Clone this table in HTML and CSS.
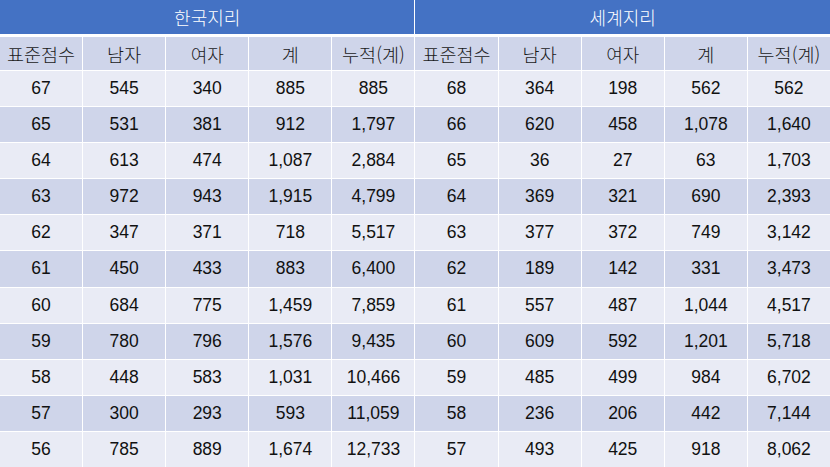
FILE: index.html
```html
<!DOCTYPE html>
<html lang="ko">
<head>
<meta charset="utf-8">
<link rel="stylesheet" href="styles.css">
</head>
<body>
<div class="table">
  <div class="group">한국지리</div>
  <div class="group">세계지리</div>
  <div class="head">표준점수</div><div class="head">남자</div><div class="head">여자</div><div class="head">계</div><div class="head">누적(계)</div>
  <div class="head">표준점수</div><div class="head">남자</div><div class="head">여자</div><div class="head">계</div><div class="head">누적(계)</div>

  <div class="c l">67</div><div class="c l">545</div><div class="c l">340</div><div class="c l">885</div><div class="c l">885</div><div class="c l">68</div><div class="c l">364</div><div class="c l">198</div><div class="c l">562</div><div class="c l">562</div>
  <div class="c d">65</div><div class="c d">531</div><div class="c d">381</div><div class="c d">912</div><div class="c d">1,797</div><div class="c d">66</div><div class="c d">620</div><div class="c d">458</div><div class="c d">1,078</div><div class="c d">1,640</div>
  <div class="c l">64</div><div class="c l">613</div><div class="c l">474</div><div class="c l">1,087</div><div class="c l">2,884</div><div class="c l">65</div><div class="c l">36</div><div class="c l">27</div><div class="c l">63</div><div class="c l">1,703</div>
  <div class="c d">63</div><div class="c d">972</div><div class="c d">943</div><div class="c d">1,915</div><div class="c d">4,799</div><div class="c d">64</div><div class="c d">369</div><div class="c d">321</div><div class="c d">690</div><div class="c d">2,393</div>
  <div class="c l">62</div><div class="c l">347</div><div class="c l">371</div><div class="c l">718</div><div class="c l">5,517</div><div class="c l">63</div><div class="c l">377</div><div class="c l">372</div><div class="c l">749</div><div class="c l">3,142</div>
  <div class="c d">61</div><div class="c d">450</div><div class="c d">433</div><div class="c d">883</div><div class="c d">6,400</div><div class="c d">62</div><div class="c d">189</div><div class="c d">142</div><div class="c d">331</div><div class="c d">3,473</div>
  <div class="c l">60</div><div class="c l">684</div><div class="c l">775</div><div class="c l">1,459</div><div class="c l">7,859</div><div class="c l">61</div><div class="c l">557</div><div class="c l">487</div><div class="c l">1,044</div><div class="c l">4,517</div>
  <div class="c d">59</div><div class="c d">780</div><div class="c d">796</div><div class="c d">1,576</div><div class="c d">9,435</div><div class="c d">60</div><div class="c d">609</div><div class="c d">592</div><div class="c d">1,201</div><div class="c d">5,718</div>
  <div class="c l">58</div><div class="c l">448</div><div class="c l">583</div><div class="c l">1,031</div><div class="c l">10,466</div><div class="c l">59</div><div class="c l">485</div><div class="c l">499</div><div class="c l">984</div><div class="c l">6,702</div>
  <div class="c d">57</div><div class="c d">300</div><div class="c d">293</div><div class="c d">593</div><div class="c d">11,059</div><div class="c d">58</div><div class="c d">236</div><div class="c d">206</div><div class="c d">442</div><div class="c d">7,144</div>
  <div class="c l">56</div><div class="c l">785</div><div class="c l">889</div><div class="c l">1,674</div><div class="c l">12,733</div><div class="c l">57</div><div class="c l">493</div><div class="c l">425</div><div class="c l">918</div><div class="c l">8,062</div>
</div>
</body>
</html>
```

FILE: styles.css
```css
html, body {
  margin: 0;
  padding: 0;
  background: #ffffff;
}
.table {
  width: 830px;
  height: 467px;
  display: grid;
  grid-template-columns: repeat(10, 1fr);
  grid-template-rows: 34px 35px repeat(11, 1fr);
  column-gap: 1px;
  row-gap: 1px;
  background: #ffffff;
  font-family: "Liberation Sans", "Noto Sans CJK KR", Arial, sans-serif;
  font-size: 17.5px;
  color: #111111;
}
.table > div {
  display: flex;
  align-items: center;
  justify-content: center;
}
.group {
  grid-column: span 5;
  background: #4472c4;
  color: #ffffff;
  font-family: "Noto Sans CJK KR", sans-serif;
  font-weight: 300;
  font-size: 18px;
}
.head {
  background: #cfd5ea;
  margin-top: 2px;
  font-family: "Noto Sans CJK KR", sans-serif;
  font-weight: 300;
  font-size: 18.5px;
  color: #1a1a1a;
}
.head:nth-child(5), .head:nth-child(10) {
  font-size: 18px;
}
.l { background: #e9ebf5; }
.d { background: #cfd5ea; }
```
